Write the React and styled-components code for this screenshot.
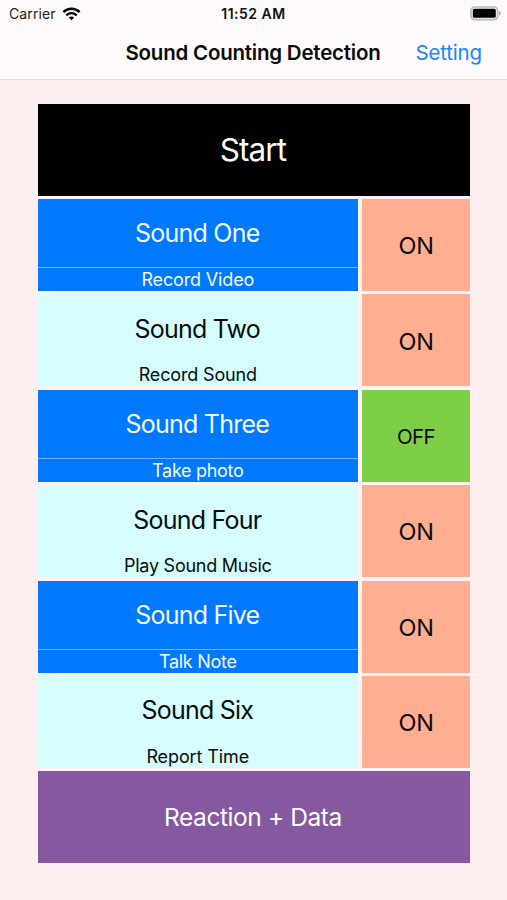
import React from 'react'
import styled, { createGlobalStyle } from 'styled-components'

const GlobalStyle = createGlobalStyle`
  * {
    box-sizing: border-box;
  }
  body {
    margin: 0;
    background: #feeef0;
    font-family: Inter, "Liberation Sans", sans-serif;
    color: #000;
  }
`

const Screen = styled.div`
  width: 507px;
  height: 900px;
  display: flex;
  flex-direction: column;
  overflow: hidden;
  background: #feeef0;
`

const Header = styled.header`
  height: 80px;
  flex: none;
  background: #fefafb;
  border-bottom: 1px solid #e6dce0;
`

const StatusBar = styled.div`
  display: grid;
  grid-template-columns: 1fr auto 1fr;
  align-items: center;
  height: 27px;
  padding: 0 6px 0 9px;
  font-size: 14px;
`

const Carrier = styled.div`
  display: flex;
  align-items: center;
  gap: 6px;
  color: #222;
  letter-spacing: 0.1px;
`

const Time = styled.div`
  margin-left: -3px;
  font-weight: 600;
  letter-spacing: 0.5px;
  color: #111;
`

const BatterySlot = styled.div`
  display: flex;
  justify-content: flex-end;
`

const NavBar = styled.div`
  display: grid;
  grid-template-columns: 1fr auto 1fr;
  align-items: center;
  height: 51px;
  padding: 0 25px 0 24px;
`

const Title = styled.h1`
  grid-column: 2;
  margin: 0;
  font-size: 20.5px;
  font-weight: 600;
  letter-spacing: -0.22px;
  color: #0a0a0a;
`

const SettingLink = styled.button`
  justify-self: end;
  padding: 0;
  border: 0;
  background: none;
  font: inherit;
  font-size: 20.5px;
  letter-spacing: -0.15px;
  color: #1a86ff;
`

const Panel = styled.main`
  display: grid;
  grid-template-rows: repeat(8, 1fr);
  gap: 3.5px;
  width: 432.6px;
  height: 759.8px;
  margin: 23.6px 0 0 37.6px;
  background: #fef2f4;
`

const BigButton = styled.button`
  padding: 0 2px 0 0;
  border: 0;
  font: inherit;
  font-size: ${(p) => p.$size}px;
  letter-spacing: ${(p) => p.$tracking}px;
  color: #fff;
  background: ${(p) => p.$bg};
`

const Row = styled.div`
  display: grid;
  grid-template-columns: 320.4px 1fr;
  gap: 4px;
`

const SoundCell = styled.div`
  display: grid;
  grid-template-rows: 1fr 23.7px;
  text-align: center;
  color: ${(p) => (p.$dark ? '#f4faff' : '#080c0c')};
  background: ${(p) => (p.$dark ? '#0079ff' : '#d6fefe')};
`

const SoundName = styled.div`
  display: flex;
  align-items: center;
  justify-content: center;
  padding: 0.6px 1px 0 0;
  font-size: 25px;
  letter-spacing: -0.78px;
`

const SoundAction = styled.div`
  display: flex;
  align-items: center;
  justify-content: center;
  border-top: 1px solid ${(p) => (p.$dark ? '#74b4fc' : '#e2f9f8')};
  font-size: 18px;
  letter-spacing: ${(p) => p.$tracking}px;
`

const Toggle = styled.button`
  padding: 1.4px 0 0;
  border: 0;
  font: inherit;
  font-size: ${(p) => (p.$on ? 23.5 : 20.5)}px;
  letter-spacing: ${(p) => (p.$on ? -0.2 : -0.6)}px;
  color: #0c0806;
  background: ${(p) => (p.$on ? '#ffae92' : '#7dcf48')};
`

const sounds = [
  { name: 'Sound One', action: 'Record Video', on: true, tracking: -0.15 },
  { name: 'Sound Two', action: 'Record Sound', on: true, tracking: -0.15 },
  { name: 'Sound Three', action: 'Take photo', on: false, tracking: -0.3 },
  { name: 'Sound Four', action: 'Play Sound Music', on: true, tracking: -0.25 },
  { name: 'Sound Five', action: 'Talk Note', on: true, tracking: -0.3 },
  { name: 'Sound Six', action: 'Report Time', on: true, tracking: -0.1 },
]

function WifiIcon() {
  return (
    <svg width="19" height="14" viewBox="0 0 19 14" fill="none">
      <path d="M1.4 5.2C6 0.7 13 0.7 17.6 5.2" stroke="#000" strokeWidth="2.5" />
      <path d="M4.3 8.3C7.3 5.5 11.7 5.5 14.7 8.3" stroke="#000" strokeWidth="2.3" />
      <path d="M9.5 13.3L6.8 10.6C8.3 9.2 10.7 9.2 12.2 10.6Z" fill="#000" />
    </svg>
  )
}

function BatteryIcon() {
  return (
    <svg width="31" height="15" viewBox="0 0 31 15" fill="none">
      <rect x="1" y="1" width="26.6" height="12.6" rx="3.6" stroke="#b9b6b7" strokeWidth="1.7" />
      <rect x="2.8" y="2.8" width="23" height="9" rx="1.6" fill="#000" />
      <path d="M29 5C31.2 5.6 31.2 9 29 9.6Z" fill="#aaa7a8" />
    </svg>
  )
}

function App() {
  return (
    <Screen>
      <GlobalStyle />
      <Header>
        <StatusBar>
          <Carrier>
            Carrier
            <WifiIcon />
          </Carrier>
          <Time>11:52 AM</Time>
          <BatterySlot>
            <BatteryIcon />
          </BatterySlot>
        </StatusBar>
        <NavBar>
          <Title>Sound Counting Detection</Title>
          <SettingLink>Setting</SettingLink>
        </NavBar>
      </Header>
      <Panel>
        <BigButton $bg="#000" $size={31.5} $tracking={-0.9}>Start</BigButton>
        {sounds.map((s, i) => (
          <Row key={s.name}>
            <SoundCell $dark={i % 2 === 0}>
              <SoundName>{s.name}</SoundName>
              <SoundAction $dark={i % 2 === 0} $tracking={s.tracking}>{s.action}</SoundAction>
            </SoundCell>
            <Toggle $on={s.on}>{s.on ? 'ON' : 'OFF'}</Toggle>
          </Row>
        ))}
        <BigButton $bg="#85589f" $size={24.5} $tracking={-0.42}>Reaction + Data</BigButton>
      </Panel>
    </Screen>
  )
}

export default App
